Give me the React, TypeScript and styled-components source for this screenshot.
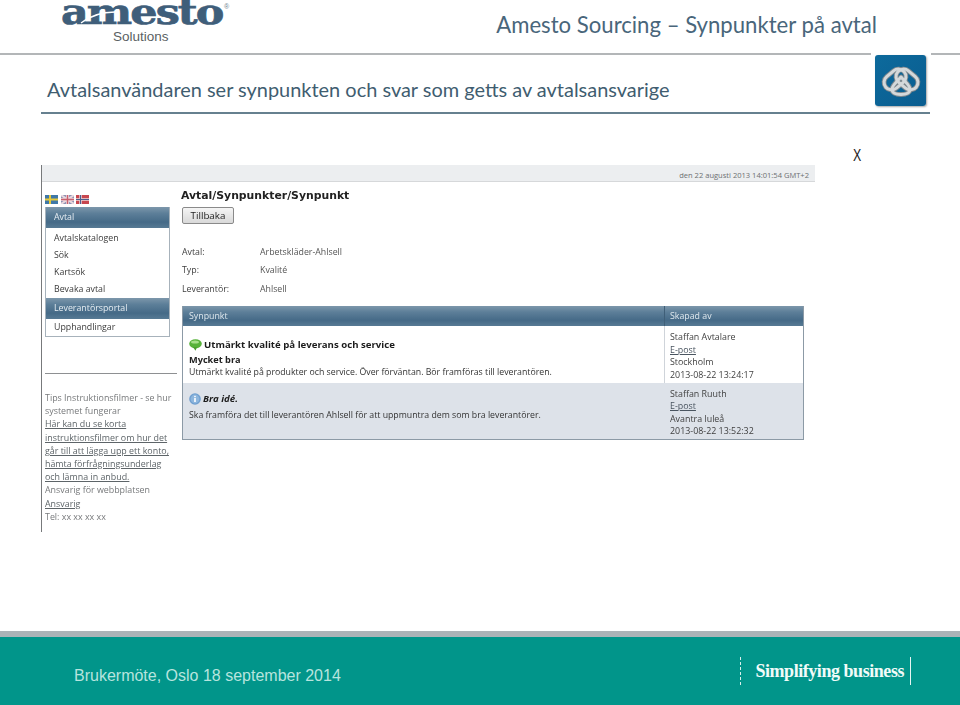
import React from "react";
import styled, { createGlobalStyle } from "styled-components";

const GlobalStyle = createGlobalStyle`
  html, body {
    margin: 0;
    padding: 0;
    background: #fff;
  }
`;

const menuGradient = "linear-gradient(#7d97ab 0%, #5d7f99 30%, #456a87 72%, #577a94 100%)";

function SwedenFlag() {
  return (
    <svg width="13" height="9" viewBox="0 0 13 9">
      <rect width="13" height="9" fill="#3f78a8" />
      <rect x="4" width="2" height="9" fill="#e6c93a" />
      <rect y="3.5" width="13" height="2" fill="#e6c93a" />
    </svg>
  );
}

function UkFlag() {
  return (
    <svg width="13" height="9" viewBox="0 0 13 9">
      <rect width="13" height="9" fill="#8d93b5" />
      <path d="M0 0L13 9M13 0L0 9" stroke="#ead9de" strokeWidth="2" />
      <path d="M6.5 0V9M0 4.5H13" stroke="#ead9de" strokeWidth="3" />
      <path d="M6.5 0V9M0 4.5H13" stroke="#c9606e" strokeWidth="1.4" />
    </svg>
  );
}

function NorwayFlag() {
  return (
    <svg width="13" height="9" viewBox="0 0 13 9">
      <rect width="13" height="9" fill="#c8474f" />
      <path d="M4.5 0V9M0 4.5H13" stroke="#f0d9da" strokeWidth="2.6" />
      <path d="M4.5 0V9M0 4.5H13" stroke="#4b5f8d" strokeWidth="1.2" />
    </svg>
  );
}

function KnotLinks({ color, width }: { color: string; width: number }) {
  return (
    <g fill="none" stroke={color} strokeWidth={width}>
      <rect x="3" y="7" width="24" height="15" rx="7.5" transform="rotate(-40 15 14.5)" />
      <rect x="15" y="7" width="24" height="15" rx="7.5" transform="rotate(40 27 14.5)" />
      <path d="M21 12C17 17 11 21 12 25C12.6 28 16 29.5 21 29.5C26 29.5 29.4 28 30 25C31 21 25 17 21 12Z" strokeLinejoin="round" />
    </g>
  );
}

function KnotIcon() {
  return (
    <svg width="42" height="32" viewBox="0 0 42 32">
      <KnotLinks color="#7f888e" width={4.8} />
      <KnotLinks color="#d4d8da" width={3} />
    </svg>
  );
}

function SpeechIcon() {
  return (
    <svg width="13" height="12" viewBox="0 0 13 12">
      <ellipse cx="6.5" cy="4.8" rx="6.3" ry="4.6" fill="#57b23a" />
      <path d="M4 8L6.5 11.8L8 8Z" fill="#4a9f30" />
      <ellipse cx="6" cy="3" rx="4" ry="1.6" fill="#a6e08a" />
    </svg>
  );
}

function InfoIcon() {
  return (
    <svg width="12" height="12" viewBox="0 0 12 12">
      <circle cx="6" cy="6" r="5.8" fill="#6f9fd0" />
      <circle cx="6" cy="6" r="4.4" fill="#8db6dd" />
      <rect x="5.2" y="5" width="1.6" height="4" fill="#fff" />
      <rect x="5.2" y="2.8" width="1.6" height="1.4" fill="#fff" />
    </svg>
  );
}

export default function App(): React.ReactElement {
  return (
    <Slide>
      <GlobalStyle />
      <Header>
        <LogoBlock>
          <LogoWord>amesto</LogoWord>
          <LogoMark>®</LogoMark>
          <LogoSwoosh width="36" height="14" viewBox="0 0 36 14">
            <path d="M1 13C10 6 20 2 35 2" fill="none" stroke="#fff" strokeWidth="1.3" />
          </LogoSwoosh>
          <LogoSub>Solutions</LogoSub>
        </LogoBlock>
        <SlideTitle>Amesto Sourcing – Synpunkter på avtal</SlideTitle>
      </Header>
      <Badge>
        <BadgeTile>
          <KnotIcon />
        </BadgeTile>
      </Badge>
      <SubHeading>
        <SubText>Avtalsanvändaren ser synpunkten och svar som getts av avtalsansvarige</SubText>
      </SubHeading>
      <Body>
        <Shot>
          <ShotTop>den 22 augusti 2013 14:01:54 GMT+2</ShotTop>
          <ShotColumns>
            <Side>
              <Flags>
                <SwedenFlag />
                <UkFlag />
                <NorwayFlag />
              </Flags>
              <Menu>
                <MenuHead>Avtal</MenuHead>
                <MenuList>
                  <MenuItem>Avtalskatalogen</MenuItem>
                  <MenuItem>Sök</MenuItem>
                  <MenuItem>Kartsök</MenuItem>
                  <MenuItem>Bevaka avtal</MenuItem>
                </MenuList>
                <MenuHead>Leverantörsportal</MenuHead>
                <MenuItem>Upphandlingar</MenuItem>
              </Menu>
              <SideRule />
              <Tips>
                <div>Tips Instruktionsfilmer - se hur</div>
                <div>systemet fungerar</div>
                <TipLink>Här kan du se korta</TipLink>
                <TipLink>instruktionsfilmer om hur det</TipLink>
                <TipLink>går till att lägga upp ett konto,</TipLink>
                <TipLink>hämta förfrågningsunderlag</TipLink>
                <TipLink>och lämna in anbud.</TipLink>
                <div>Ansvarig för webbplatsen</div>
                <TipLink>Ansvarig</TipLink>
                <div>Tel: xx xx xx xx</div>
              </Tips>
            </Side>
            <Main>
              <MainTitle>Avtal/Synpunkter/Synpunkt</MainTitle>
              <BackButton>Tillbaka</BackButton>
              <Fields>
                <FieldLabel>Avtal:</FieldLabel>
                <FieldValue>Arbetskläder-Ahlsell</FieldValue>
                <FieldLabel>Typ:</FieldLabel>
                <FieldValue>Kvalité</FieldValue>
                <FieldLabel>Leverantör:</FieldLabel>
                <FieldValue>Ahlsell</FieldValue>
              </Fields>
              <Table>
                <TableRow>
                  <HeadCell>Synpunkt</HeadCell>
                  <HeadCell $side>Skapad av</HeadCell>
                </TableRow>
                <TableRow>
                  <BodyCell>
                    <RowTitle>
                      <SpeechIcon />
                      Utmärkt kvalité på leverans och service
                    </RowTitle>
                    <RowStrong>Mycket bra</RowStrong>
                    <div>Utmärkt kvalité på produkter och service. Över förväntan. Bör framföras till leverantören.</div>
                  </BodyCell>
                  <AuthorCell>
                    <div>Staffan Avtalare</div>
                    <MailLink>E-post</MailLink>
                    <div>Stockholm</div>
                    <div>2013-08-22 13:24:17</div>
                  </AuthorCell>
                </TableRow>
                <TableRow $shaded>
                  <BodyCell>
                    <RowTitle $italic>
                      <InfoIcon />
                      Bra idé.
                    </RowTitle>
                    <div>Ska framföra det till leverantören Ahlsell för att uppmuntra dem som bra leverantörer.</div>
                  </BodyCell>
                  <AuthorCell $shaded>
                    <div>Staffan Ruuth</div>
                    <MailLink>E-post</MailLink>
                    <div>Avantra luleå</div>
                    <div>2013-08-22 13:52:32</div>
                  </AuthorCell>
                </TableRow>
              </Table>
            </Main>
          </ShotColumns>
        </Shot>
        <CloseMark>X</CloseMark>
      </Body>
      <Footer>
        <FooterText>Brukermöte, Oslo 18 september 2014</FooterText>
        <Tagline>Simplifying business</Tagline>
      </Footer>
    </Slide>
  );
}

const Slide = styled.div`
  position: relative;
  width: 960px;
  height: 705px;
  display: flex;
  flex-direction: column;
  overflow: hidden;
  background: #fff;
  font-family: "Lato", "Liberation Sans", sans-serif;
`;

const Header = styled.header`
  height: 53px;
  flex: none;
  display: flex;
  justify-content: space-between;
  padding: 0 83px 0 61px;
  border-bottom: 2px solid #b3b6b8;
`;

const LogoBlock = styled.div`
  position: relative;
  width: 172px;
  display: flex;
  flex-direction: column;
`;

const LogoWord = styled.div`
  font-family: "DejaVu Serif", serif;
  font-weight: 700;
  font-size: 36px;
  line-height: 20px;
  height: 26px;
  margin-top: 1px;
  letter-spacing: -1.6px;
  color: #3f5e7a;
  white-space: nowrap;
  -webkit-text-stroke: 0.7px #3f5e7a;
  transform: scaleX(1.19);
  transform-origin: left top;
`;

const LogoMark = styled.span`
  position: absolute;
  top: 3px;
  left: 163px;
  font-family: "Liberation Sans", sans-serif;
  font-size: 7px;
  line-height: 8px;
  color: #6c7f8e;
`;

const LogoSwoosh = styled.svg`
  position: absolute;
  top: 10px;
  left: 19px;
`;

const LogoSub = styled.div`
  font-family: "Liberation Sans", sans-serif;
  font-size: 13.5px;
  line-height: 16px;
  margin: 2px 0 0 52px;
  color: #5a5f63;
`;

const SlideTitle = styled.h1`
  margin: 11px 0 0;
  font-weight: 400;
  font-size: 22.15px;
  line-height: 28px;
  color: #49667b;
  white-space: nowrap;
`;

const Badge = styled.div`
  position: absolute;
  top: 50px;
  left: 871px;
  width: 60px;
  height: 60px;
  display: flex;
  padding: 5px 0 0 4px;
  box-sizing: border-box;
  background: #fff;
`;

const BadgeTile = styled.div`
  width: 51px;
  height: 51px;
  display: flex;
  align-items: center;
  justify-content: center;
  border-radius: 3px;
  background: linear-gradient(135deg, #0d6a9c, #0a5d90);
  box-shadow: 1px 1px 2px rgba(0, 0, 0, 0.35);
`;

const SubHeading = styled.div`
  flex: none;
  position: relative;
  height: 59px;
  margin: 0 30px 0 41px;
  padding: 20px 0 0 6px;
  box-sizing: border-box;
  border-bottom: 2px solid #66808f;
`;

const SubText = styled.h2`
  margin: 0;
  font-weight: 400;
  font-size: 19.95px;
  line-height: 28px;
  color: #3f5d70;
  white-space: nowrap;
`;

const Body = styled.main`
  flex: 1;
  display: flex;
  align-items: flex-start;
  padding: 33px 0 0 41px;
`;

const CloseMark = styled.div`
  margin-left: 38px;
  font-family: "Liberation Sans", sans-serif;
  font-size: 16.5px;
  line-height: 17px;
  color: #222;
  transform: scaleX(0.75);
  transform-origin: left top;
`;

const Shot = styled.section`
  width: 774px;
  height: 367px;
  flex: none;
  margin-top: 18px;
  display: flex;
  flex-direction: column;
  box-sizing: border-box;
  border-left: 1px solid #77797b;
  font-family: "Open Sans", "Liberation Sans", sans-serif;
  font-size: 8.8px;
  color: #3b3b3b;
  filter: blur(0.3px);
`;

const ShotTop = styled.div`
  height: 17px;
  flex: none;
  padding: 3px 6px 0 0;
  box-sizing: border-box;
  text-align: right;
  font-size: 7.55px;
  line-height: 15px;
  color: #6d7072;
  background: #eceef0;
  border-bottom: 1px solid #d6d8da;
`;

const ShotColumns = styled.div`
  flex: 1;
  display: flex;
`;

const Side = styled.aside`
  width: 135px;
  flex: none;
  box-sizing: border-box;
  padding: 13px 0 0 3px;
`;

const Flags = styled.div`
  height: 9px;
  display: flex;
  gap: 2.5px;
`;

const Menu = styled.nav`
  width: 125px;
  margin-top: 3px;
  box-sizing: border-box;
  border: 1px solid #a7b2bb;
  border-top: 0;
`;

const MenuHead = styled.div`
  height: 20.5px;
  padding-left: 8px;
  font-size: 8.8px;
  line-height: 20.5px;
  color: #e6edf2;
  background: ${menuGradient};
`;

const MenuList = styled.div`
  padding: 2px 0 0;
`;

const MenuItem = styled.div`
  height: 17.2px;
  padding-left: 8px;
  font-size: 8.8px;
  line-height: 17px;
`;

const SideRule = styled.div`
  height: 1px;
  width: 132px;
  margin-top: 36px;
  background: #8e9092;
`;

const Tips = styled.div`
  margin-top: 17px;
  font-size: 8.9px;
  line-height: 13.2px;
  color: #77797b;
  white-space: nowrap;
`;

const TipLink = styled.div`
  color: #5d6468;
  text-decoration: underline;
`;

const Main = styled.div`
  width: 622px;
  flex: none;
  margin-left: 5px;
`;

const MainTitle = styled.div`
  margin: 7px 0 0 -1px;
  font-family: "DejaVu Sans", sans-serif;
  font-size: 10.85px;
  font-weight: 700;
  line-height: 14px;
  color: #222;
  white-space: nowrap;
`;

const BackButton = styled.button`
  display: block;
  width: 52px;
  height: 17px;
  margin-top: 4px;
  padding: 0;
  border: 1px solid #8a8a8a;
  border-radius: 2px;
  font-family: "Open Sans", sans-serif;
  font-size: 9.8px;
  line-height: 14px;
  color: #222;
  background: linear-gradient(#f5f5f5, #d9d9d9);
`;

const Fields = styled.div`
  display: grid;
  grid-template-columns: 78px 1fr;
  grid-auto-rows: 18.5px;
  margin-top: 18.7px;
  line-height: 18.5px;
`;

const FieldLabel = styled.div`
  color: #3f3f3f;
`;

const FieldValue = styled.div`
  color: #555;
`;

const Table = styled.div`
  margin-top: 8.3px;
  box-sizing: border-box;
  border: 1px solid #8c9aa6;
  border-top: 0;
`;

const TableRow = styled.div<{ $shaded?: boolean }>`
  display: grid;
  grid-template-columns: 481px 1fr;
  background: ${(p) => (p.$shaded ? "#dde2e9" : "#fff")};
`;

const HeadCell = styled.div<{ $side?: boolean }>`
  height: 20px;
  padding-left: ${(p) => (p.$side ? "5px" : "6px")};
  font-size: 8.8px;
  line-height: 21px;
  color: #dfe8ee;
  background: ${menuGradient};
  border-left: ${(p) => (p.$side ? "1px solid #3f5f78" : "0")};
`;

const BodyCell = styled.div`
  height: 56.5px;
  padding: 12px 0 0 6px;
  box-sizing: border-box;
  font-size: 8.75px;
  line-height: 12px;
  color: #333;
  white-space: nowrap;
`;

const RowTitle = styled.div<{ $italic?: boolean }>`
  display: flex;
  align-items: center;
  gap: 2px;
  height: 13px;
  margin-top: ${(p) => (p.$italic ? "-2px" : "0")};
  margin-bottom: ${(p) => (p.$italic ? "3.5px" : "2px")};
  font-size: 9.65px;
  font-weight: 700;
  font-style: ${(p) => (p.$italic ? "italic" : "normal")};
  color: #1c1c1c;
`;

const RowStrong = styled.div`
  font-weight: 700;
  font-size: 9.2px;
  line-height: 13px;
  color: #222;
`;

const AuthorCell = styled.div<{ $shaded?: boolean }>`
  height: 56.5px;
  padding: 5px 0 0 5px;
  box-sizing: border-box;
  font-size: 8.9px;
  line-height: 12.5px;
  color: #3f3f3f;
  white-space: nowrap;
  border-left: 1px solid ${(p) => (p.$shaded ? "#dde2e9" : "#cfd4da")};
`;

const MailLink = styled.div`
  color: #4a5560;
  text-decoration: underline;
`;

const Footer = styled.footer`
  height: 68px;
  flex: none;
  display: flex;
  align-items: flex-start;
  justify-content: space-between;
  padding: 0 49px 0 74px;
  border-top: 6px solid #abb3b7;
  background: #01958a;
`;

const FooterText = styled.div`
  margin-top: 29px;
  font-family: "Liberation Sans", sans-serif;
  font-size: 16px;
  line-height: 20px;
  color: #b7e4de;
  white-space: nowrap;
`;

const Tagline = styled.div`
  margin-top: 20px;
  height: 28px;
  padding: 0 6px 0 14px;
  font-family: "Liberation Serif", serif;
  font-weight: 700;
  font-size: 18px;
  line-height: 28px;
  letter-spacing: -0.45px;
  color: #f1fbf9;
  white-space: nowrap;
  border-left: 1px dashed #d8efeb;
  border-right: 1px solid #e6f5f2;
`;
